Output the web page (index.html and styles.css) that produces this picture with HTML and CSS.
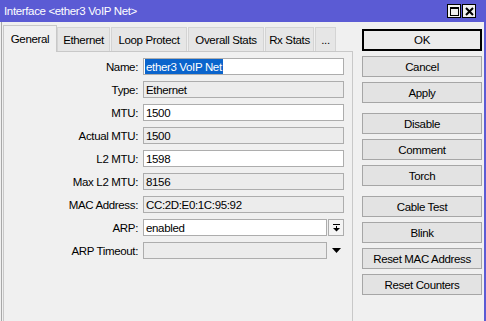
FILE: index.html
```html
<!DOCTYPE html>
<html>
  <head>
    <meta http-equiv="Content-Type" content="text/html; charset=UTF-8"/>
    <link rel="stylesheet" href="styles.css">
  </head>
  <body>
    <div class="window">
      <div class="titlebar">
        <span class="title">Interface &lt;ether3 VoIP Net&gt;</span>
        <div class="titleButtons">
          <span class="titleButton">
            <svg width="9" height="9" viewBox="0 0 9 9"><rect x="0.5" y="0.5" width="8" height="8" fill="none" stroke="#000"/><rect x="0" y="0" width="9" height="2" fill="#000"/></svg>
          </span>
          <span class="titleButton">
            <svg width="9" height="9" viewBox="0 0 9 9"><path d="M1 1 L8 8 M8 1 L1 8" stroke="#000" stroke-width="2"/></svg>
          </span>
        </div>
      </div>

      <div class="content">
        <div class="tabsArea">
          <div class="tabs">
            <div class="tab selected" style="width: 54px">General</div>
            <div class="tab" style="width: 53px">Ethernet</div>
            <div class="tab" style="width: 76px">Loop Protect</div>
            <div class="tab" style="width: 76px">Overall Stats</div>
            <div class="tab" style="width: 49px">Rx Stats</div>
            <div class="tab" style="width: 21px">...</div>
          </div>
          <div class="panel">
            <div class="form">
              <div class="label">Name:</div>
              <div class="field"><span class="selection">ether3 VoIP Net</span></div>

              <div class="label">Type:</div>
              <div class="field readonly">Ethernet</div>

              <div class="label">MTU:</div>
              <div class="field">1500</div>

              <div class="label">Actual MTU:</div>
              <div class="field readonly">1500</div>

              <div class="label">L2 MTU:</div>
              <div class="field">1598</div>

              <div class="label">Max L2 MTU:</div>
              <div class="field readonly">8156</div>

              <div class="label">MAC Address:</div>
              <div class="field readonly">CC:2D:E0:1C:95:92</div>

              <div class="label">ARP:</div>
              <div class="fieldRow">
                <div class="field short">enabled</div>
                <span class="dropButton">
                  <svg width="7" height="8" viewBox="0 0 7 8"><rect x="0" y="0" width="7" height="1" fill="#000"/><rect x="3" y="2" width="1" height="2" fill="#000"/><path d="M0 4 L7 4 L3.5 7.5 Z" fill="#000"/></svg>
                </span>
              </div>

              <div class="label">ARP Timeout:</div>
              <div class="fieldRow">
                <div class="field short readonly"></div>
                <span class="dropArrow">
                  <svg width="9" height="5" viewBox="0 0 9 5"><path d="M0 0 L9 0 L4.5 5 Z" fill="#000"/></svg>
                </span>
              </div>
            </div>
          </div>
        </div>

        <div class="actions">
          <button class="button default">OK</button>
          <button class="button">Cancel</button>
          <button class="button">Apply</button>
          <button class="button groupStart">Disable</button>
          <button class="button">Comment</button>
          <button class="button">Torch</button>
          <button class="button groupStart">Cable Test</button>
          <button class="button">Blink</button>
          <button class="button">Reset MAC Address</button>
          <button class="button">Reset Counters</button>
        </div>
      </div>
    </div>
  </body>
</html>
```

FILE: styles.css
```css
html {
  font-family: 'Liberation Sans', Arial, sans-serif;
  font-size: 11.5px;
  letter-spacing: -0.35px;
  width: 100%;
  height: 100%;
  margin: 0;
  padding: 0;
  overflow: hidden;
}
body {
  width: 100%;
  height: 100%;
  margin: 0;
  padding: 0;
}
* {
  box-sizing: border-box;
}

.window {
  width: 486px;
  height: 321px;
  background: #f0f0f0;
  display: flex;
  flex-direction: column;
}

.titlebar {
  height: 22px;
  background: #5b5bd4;
  display: flex;
  align-items: center;
  justify-content: space-between;
  padding: 0 10px 0 4px;
}
.title {
  color: #fff;
}
.titleButtons {
  display: flex;
  gap: 1px;
}
.titleButton {
  width: 14px;
  height: 14px;
  background: #f0f0f0;
  border: 1px solid #000;
  display: flex;
  align-items: center;
  justify-content: center;
}

.content {
  flex: 1;
  display: flex;
  margin-left: 1px;
  border-left: 1px solid #a8a8a8;
  border-right: 2px solid #5b5bd4;
}

.tabsArea {
  width: 350px;
  margin-left: 1px;
  display: flex;
  flex-direction: column;
}
.tabs {
  height: 29px;
  display: flex;
  align-items: flex-end;
}
.tab {
  height: 24px;
  margin-right: 1px;
  background: #e6e6e6;
  border: 1px solid #d4d4d4;
  border-bottom: none;
  display: flex;
  align-items: center;
  justify-content: center;
  color: #000;
  white-space: nowrap;
}
.tab.selected {
  height: 27px;
  margin-right: 0;
  margin-bottom: -1px;
  background: #f0f0f0;
  border-color: #c8c8c8;
  position: relative;
  z-index: 1;
}

.panel {
  flex: 1;
  border: 1px solid #c8c8c8;
  border-bottom: none;
}
.form {
  display: grid;
  grid-template-columns: 130px 201px;
  column-gap: 5px;
  row-gap: 6px;
  grid-auto-rows: 17px;
  padding: 6px 0 0 4px;
}
.label {
  display: flex;
  align-items: center;
  justify-content: flex-end;
  color: #000;
}
.field {
  height: 17px;
  background: #fff;
  border: 1px solid #adadad;
  padding: 0 2px;
  display: flex;
  align-items: center;
  white-space: nowrap;
  overflow: hidden;
}
.field.readonly {
  background: #ececec;
}
.field.short {
  width: 184px;
}
.selection {
  height: 15px;
  display: flex;
  align-items: center;
  background: #0a64cc;
  color: #fff;
  margin-left: -1px;
  padding: 0 1px;
}
.fieldRow {
  display: flex;
  gap: 1px;
}
.dropButton {
  width: 16px;
  height: 17px;
  background: #f4f4f4;
  border: 1px solid #adadad;
  display: flex;
  align-items: center;
  justify-content: center;
}
.dropArrow {
  width: 16px;
  height: 17px;
  display: flex;
  align-items: center;
  justify-content: center;
}

.actions {
  width: 120px;
  margin-left: 9px;
  padding-top: 7px;
  display: flex;
  flex-direction: column;
  gap: 5px;
}
.button {
  height: 21px;
  margin: 0;
  padding: 0;
  background: #e3e3e3;
  border: 1px solid #a6a6a6;
  font-family: inherit;
  font-size: 11.5px;
  letter-spacing: -0.35px;
  color: #000;
}
.button.default {
  height: 22px;
  background: #ececec;
  border: 2px solid #000;
}
.button.groupStart {
  margin-top: 5px;
}
```
